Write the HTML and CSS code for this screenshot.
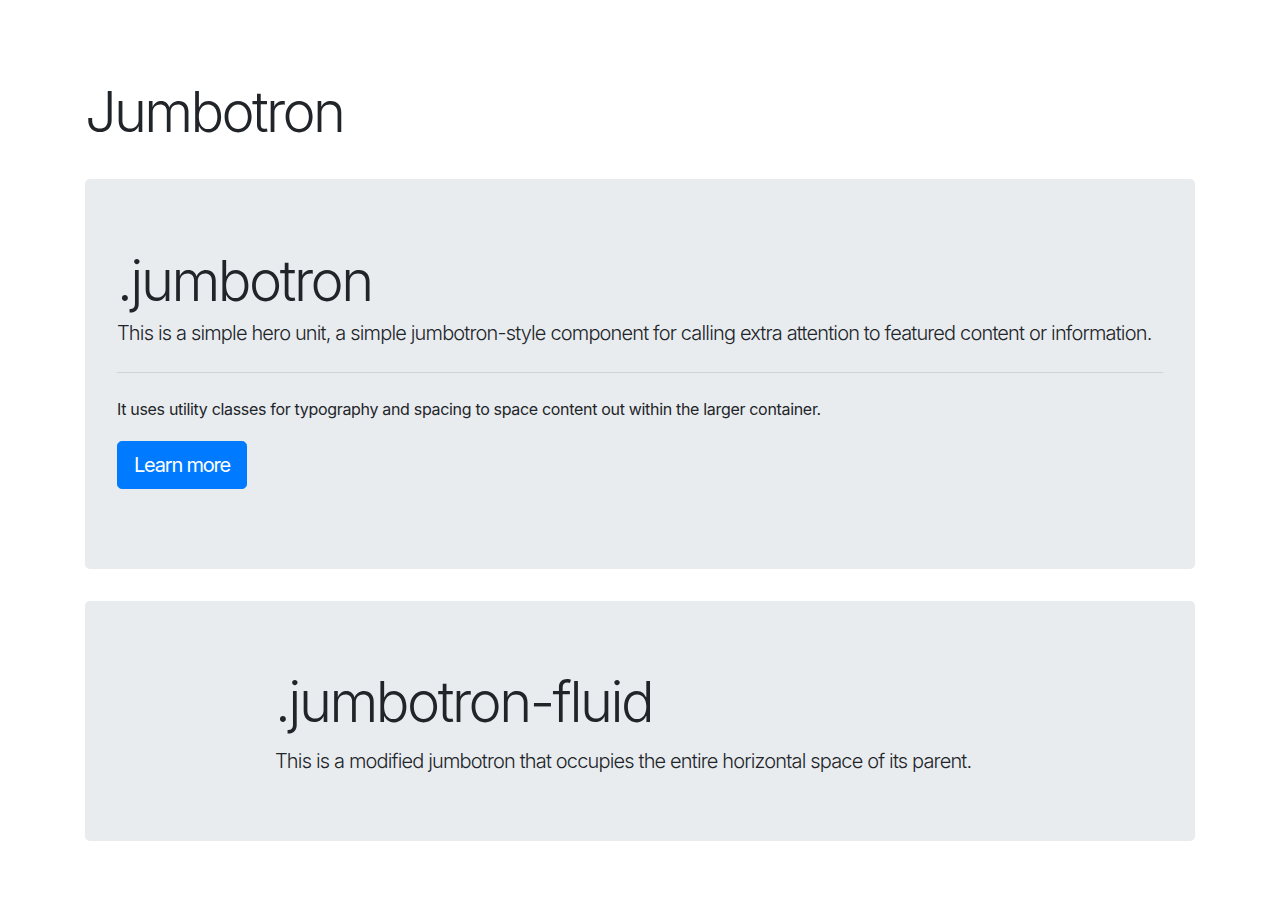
FILE: index.html
```html
<!DOCTYPE html>
<html lang="en">
<head>
<meta charset="utf-8">
<title>Jumbotron</title>
<link rel="stylesheet" href="styles.css">
</head>
<body>
<main class="page">
  <h1 class="page-title">Jumbotron</h1>

  <section class="jumbotron">
    <h1 class="display">.jumbotron</h1>
    <p class="lead">This is a simple hero unit, a simple jumbotron-style component for calling extra attention to featured content or information.</p>
    <hr class="divider">
    <p class="body-text">It uses utility classes for typography and spacing to space content out within the larger container.</p>
    <div class="actions"><a class="btn" href="#">Learn more</a></div>
  </section>

  <section class="jumbotron jumbotron-fluid">
    <div class="inner">
      <h1 class="display">.jumbotron-fluid</h1>
      <p class="lead">This is a modified jumbotron that occupies the entire horizontal space of its parent.</p>
    </div>
  </section>
</main>
</body>
</html>
```

FILE: styles.css
```css
* { box-sizing: border-box; }
html, body { margin: 0; padding: 0; }
body {
  font-family: Inter, "Noto Sans", "Liberation Sans", sans-serif;
  color: #212529;
  background: #fff;
  font-size: 16px;
  line-height: 1.5;
}
.page {
  width: 1110px;
  margin: 0 auto;
  padding-top: 79px;
}
.page-title {
  font-size: 56px;
  font-weight: 300;
  line-height: 1.2;
  margin: 0 0 33px;
  letter-spacing: -2.7px;
}
.jumbotron {
  background: #e9ecef;
  border-radius: 4.8px;
  padding: 64px 32px;
  margin-bottom: 32px;
}
.display {
  font-size: 56px;
  font-weight: 300;
  line-height: 1.2;
  margin: 0 0 3px;
  padding-top: 5px;
  letter-spacing: -2.5px;
}
.lead {
  font-size: 20px;
  font-weight: 300;
  margin: 0;
  letter-spacing: -0.84px;
}
.divider {
  border: 0;
  border-top: 1px solid rgba(0,0,0,0.1);
  margin: 24px 0;
}
.body-text {
  font-size: 16px;
  margin: 0;
  letter-spacing: -0.32px;
}
.actions {
  padding-top: 20px;
  margin-bottom: 16px;
  display: flex;
}
.btn {
  display: inline-block;
  background: #007bff;
  color: #fff;
  font-size: 20px;
  line-height: 1.5;
  padding: 8px 16px;
  border: 1px solid #007bff;
  border-radius: 4.8px;
  text-decoration: none;
  font-weight: 400;
  letter-spacing: -1.2px;
}
.jumbotron-fluid {
  padding: 64px 0 65px;
}
.jumbotron-fluid .display {
  padding-top: 4px;
  margin-bottom: 9px;
}
.inner {
  max-width: 760px;
  margin: 0 auto;
  padding: 0 15px;
}
```
